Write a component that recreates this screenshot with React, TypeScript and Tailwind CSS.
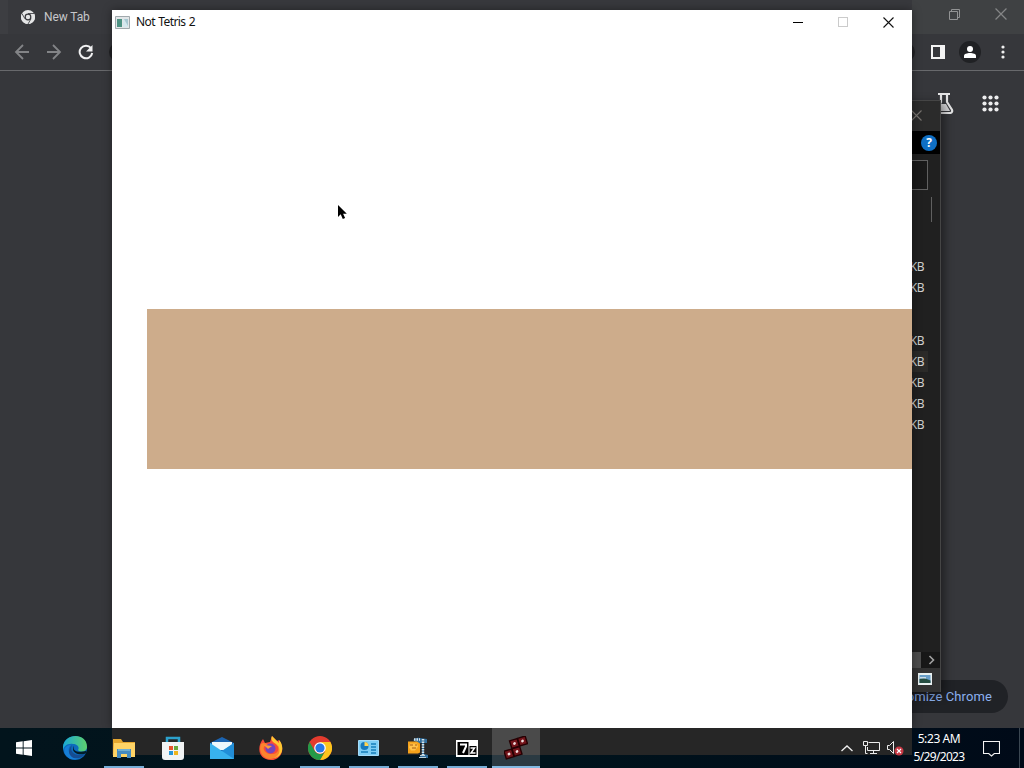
import React from "react";

function ChromeMark({ mono = false, size }: { mono?: boolean; size: number }) {
  const c = mono ? ["#e4e5e6", "#e4e5e6", "#e4e5e6"] : ["#e33b2e", "#fcc51d", "#249a48"];
  return (
    <svg width={size} height={size} viewBox="0 0 24 24">
      <circle cx="12" cy="12" r="12" fill={c[0]} />
      <path d="M12 6h10.4A12 12 0 0 1 12 24l5.2-9Z" fill={c[1]} />
      <path d="M1.6 6 6.8 15a6 6 0 0 0 10.4 0L12 24A12 12 0 0 1 1.6 6Z" fill={c[2]} />
      {mono && <path d="M12 6h10.4M6.8 15 1.6 6M17.2 15 12 24" stroke="#35363a" strokeWidth="1.4" />}
      <circle cx="12" cy="12" r="5.8" fill={mono ? "#35363a" : "#fff"} />
      <circle cx="12" cy="12" r={mono ? 3.8 : 4.6} fill={mono ? "#e4e5e6" : "#2778e8"} />
    </svg>
  );
}

function Cross({ color, size = 11 }: { color: string; size?: number }) {
  return (
    <svg width={size} height={size} viewBox="0 0 11 11">
      <path d="m.5.5 10 10m0-10-10 10" stroke={color} strokeWidth="1.1" />
    </svg>
  );
}

function Browser() {
  return (
    <div className="absolute inset-0 flex h-[728px] flex-col bg-[#36373b]">
      <div className="flex h-[34px] items-center justify-between bg-[#38393d]">
        <div className="flex h-full items-center">
          <div className="h-full w-2 bg-[#3d3e42]" />
          <div className="ml-[13px] flex items-center gap-[9px]">
            <ChromeMark mono size={14} />
            <span className="text-[12px] leading-4 tracking-[-0.1px] text-[#c6c7ca]">New Tab</span>
          </div>
        </div>
        <div className="flex h-full w-[112px] items-start bg-[#3f4143] pt-[9px] pl-[37px]">
          <svg width="11" height="11" viewBox="0 0 11 11" fill="none" stroke="#929394">
            <path d="M.5 2.5h8v8h-8zM2.5 2.5v-2h8v8h-2" />
          </svg>
          <span className="-mt-px ml-[35px]"><Cross color="#858687" size={12} /></span>
        </div>
      </div>
      <div className="flex h-[37px] items-center justify-between border-b border-[#68696c] bg-[#36373b]">
        <div className="flex items-center gap-4 pl-[14px]">
          <svg width="16" height="16" viewBox="0 0 16 16" fill="none" stroke="#838487" strokeWidth="1.8"><path d="M15 8H2m7-7L2 8l7 7" /></svg>
          <svg width="16" height="16" viewBox="0 0 16 16" fill="none" stroke="#838487" strokeWidth="1.8"><path d="M1 8h13M7 1l7 7-7 7" /></svg>
          <svg width="16" height="16" viewBox="0 0 16 16" fill="none" stroke="#f1f1f2" strokeWidth="2"><path d="M13 4.2A6.3 6.3 0 1 0 14.2 9" /><path d="M14.5 1v6.500H8Z" fill="#f1f1f2" stroke="none" /></svg>
          <div className="-ml-px h-5 w-8 rounded-full bg-[#202124]" />
        </div>
        <div className="flex items-center">
          <div className="mr-4 h-5 w-6 rounded-full bg-[#202124]" />
          <svg width="14" height="14" viewBox="0 0 14 14"><path d="M0 0h14v14H0Zm2 2v10h7V2Z" fill="#f4f4f4" fillRule="evenodd" /></svg>
          <div className="ml-[14px] flex h-[22px] w-[22px] items-center justify-center rounded-full bg-[#202124]">
            <svg width="12" height="12" viewBox="0 0 12 12" fill="#fff"><circle cx="6" cy="3" r="3" /><path d="M0 12V9.8C0 8 3 7 6 7s6 1 6 2.800V12Z" /></svg>
          </div>
          <svg className="mr-[19px] ml-5" width="4" height="14" viewBox="0 0 4 14" fill="#f0f0f0"><circle cx="2" cy="2" r="1.6" /><circle cx="2" cy="7" r="1.6" /><circle cx="2" cy="12" r="1.6" /></svg>
        </div>
      </div>
      <div className="flex flex-1 flex-col items-end justify-between pt-[20px] pb-[15px]">
        <div className="flex items-center gap-[28px] pt-px pr-[25px]">
          <svg width="19" height="23" viewBox="0 0 19 23" fill="none" stroke="#e5e5e6" strokeWidth="2.2">
            <path d="M3 2h12M6 2v8L1.500 18.500Q.8 21 3 21h12.500q2.500-1 1.300-3.500L12 10V2" />
            <path d="M5 12h6l4 7H3Z" fill="#d6d6d8" stroke="none" />
          </svg>
          <svg width="17" height="17" viewBox="0 0 17 17" fill="#ededee">
            {[2.5, 8.5, 14.5].map((y) => [2.5, 8.5, 14.5].map((x) => <circle key={x + "-" + y} cx={x} cy={y} r="2.1" />))}
          </svg>
        </div>
        <div className="mr-4 flex h-[33px] w-[150px] items-center justify-end rounded-full bg-[#202226] pr-4 text-[13px] tracking-[0.1px] text-[#8bb0ef]">
          Customize Chrome
        </div>
      </div>
    </div>
  );
}

function Explorer() {
  return (
    <div className="absolute top-[100px] left-[800px] flex h-[592px] w-[141px] flex-col border-t border-r border-[#454545] bg-[#202020] shadow-[3px_3px_9px_rgba(0,0,0,0.45)]">
      <div className="flex h-[30px] shrink-0 items-center justify-end bg-[#2b2b2b] pr-[18px] pb-[2px]"><Cross color="#77736f" /></div>
      <div className="flex h-[23px] shrink-0 items-center justify-end bg-black pr-[3px]">
        <span className="flex h-[16px] w-[16px] items-center justify-center rounded-full bg-[#0f6fc4] font-['Open_Sans',sans-serif] text-[12px] font-bold text-white">?</span>
      </div>
      <div className="mt-[6px] mr-3 h-[30px] shrink-0 border border-[#606060] bg-[#191919]" />
      <div className="mt-[7px] mr-2 h-[25px] shrink-0 border-r border-[#606060]" />
      <div className="mt-[34px] flex flex-col text-right font-['Noto_Sans',sans-serif] text-[12px] leading-[21px] tracking-[-0.5px] text-[#d1d1d1]">
        <span className="pr-4">1 KB</span>
        <span className="pr-4">1 KB</span>
        <span className="mt-8 pr-4">1 KB</span>
        <span className="mr-3 bg-[#2b2a28] pr-1">1 KB</span>
        <span className="pr-4">1 KB</span>
        <span className="pr-4">1 KB</span>
        <span className="pr-4">1 KB</span>
      </div>
      <div className="mt-auto flex h-[16px] shrink-0 items-center justify-end bg-[#171717]">
        <div className="mr-[7px] h-full w-20 bg-[#4d4d4d]" />
        <svg className="mr-1" width="8" height="10" viewBox="0 0 8 10"><path d="m1.500 1 4 4-4 4" fill="none" stroke="#a2a2a2" strokeWidth="1.600" /></svg>
      </div>
      <div className="flex h-[24px] shrink-0 items-center justify-end bg-[#323232] pr-[8px] pb-[3px]">
        <svg width="14" height="12" viewBox="0 0 14 12"><path d="M0 0h14v12H0Z" fill="#e9f1f1" /><path d="M1.500 2h11v8h-11Z" fill="#699fc9" /><path d="M1.500 6 6 5l6.500 2.500V10h-11Z" fill="#254e42" /><path d="M2 4h6v1.500H2Z" fill="#c8dde9" /></svg>
      </div>
    </div>
  );
}

function GameWindow() {
  return (
    <div className="absolute top-[10px] left-[112px] flex h-[718px] w-[800px] flex-col bg-white shadow-[0_0_9px_rgba(0,0,0,0.4)]">
      <div className="flex h-6 shrink-0 items-center justify-between pr-[18px] pl-[3px]">
        <div className="flex items-center gap-[6px]">
          <svg width="15" height="13" viewBox="0 0 15 13">
            <path d="M.5.5h14v12H.5Z" fill="#e2e6e8" stroke="#a1a9ad" />
            <path d="M2 3h5v8H2Z" fill="#4d9283" /><path d="M8 3h5v8H8Z" fill="#d5e8ee" /><path d="M9 3h4v7Z" fill="#a8c8d2" />
          </svg>
          <span className="font-['Noto_Sans',sans-serif] text-[12px] leading-[16px] tracking-[-0.55px] text-[#111] [word-spacing:0.5px]">Not Tetris 2</span>
        </div>
        <div className="flex items-center">
          <div className="h-px w-[10px] bg-black" />
          <div className="ml-[35px] h-[10px] w-[10px] border border-[#cbcbcb]" />
          <span className="ml-[35px] flex"><Cross color="#111" /></span>
        </div>
      </div>
      <div className="mt-[275px] ml-[35px] h-[160px] bg-[#cdac8b]" />
      <svg className="absolute top-[194px] left-[225px]" width="11" height="17" viewBox="0 0 11 17"><path d="M1 1v12l2.700-2.700L5.800 15l2.300-1-2-4.200h3.700Z" fill="#000" /></svg>
    </div>
  );
}

const apps: { name: string; state: string; icon: React.ReactNode }[] = [
  { name: "edge", state: "", icon: (
    <svg width="24" height="24" viewBox="0 0 24 24">
      <defs><linearGradient id="eg" x2="1"><stop stopColor="#18a9d6" /><stop offset="1" stopColor="#5ed06b" /></linearGradient></defs>
      <circle cx="12" cy="12" r="12" fill="#0d6bbd" />
      <path d="M0 11C1-3 24-4 24 11c0 5-7 6-9 3 2-3-1-6-5-6C4 7 0 11 0 15Z" fill="url(#eg)" />
      <path d="M8 9c-6 5 0 15 9 13-11 5-18-5-15-10 1-2 4-3 6-3Z" fill="#167ed6" />
      <path d="M9 9c-3 7 3 12 13 9-4 6-15 6-16-2 0-3 1-5 3-7Z" fill="#164c91" />
      <path d="M11 10c-2 5 4 7 12 5l1 2-3 1c-6 1-11-1-11-5 0-1 0-2 1-3Z" fill="#031c29" />
    </svg>) },
  { name: "files", state: "open", icon: (
    <svg width="22" height="19" viewBox="0 0 22 19"><path d="M0 0h8l2 3h12v15H0Z" fill="#e5a730" /><path d="M1 4h21v14H0Z" fill="#ffd466" /><path d="M4 10h14v9h-4v-4H8v4H4Z" fill="#468bc0" /><path d="M5 10h12v2H5Z" fill="#70afd2" /></svg>) },
  { name: "store", state: "", icon: (
    <svg width="24" height="24" viewBox="0 0 24 24"><path d="M6 7V2h12v5" fill="none" stroke="#2ca2cd" strokeWidth="2.500" /><path d="M1 6h22v15q0 3-3 3H4q-3 0-3-3Z" fill="#f1f3f4" /><path d="M8 10h4v4H8Z" fill="#e6532c" /><path d="M13 10h4v4h-4Z" fill="#69a83c" /><path d="M8 15h4v4H8Z" fill="#2696d6" /><path d="M13 15h4v4h-4Z" fill="#efb51c" /></svg>) },
  { name: "mail", state: "", icon: (
    <svg width="24" height="22" viewBox="0 0 24 22"><path d="m0 6 12-6 12 6v15H0Z" fill="#1b63b0" /><path d="M2 5h20v8H2Z" fill="#edf7fc" /><path d="m0 6 12 8 12-8v16H0Z" fill="#38b1ed" /><path d="m24 6-12 8 12 8Z" fill="#218ed7" /></svg>) },
  { name: "firefox", state: "", icon: (
    <svg width="24" height="24" viewBox="0 0 24 24"><path d="m4 3 2 4 5-1 2-6 5 5 2-1c7 9 2 20-8 20C0 24-3 12 4 3Z" fill="#f94b38" /><path d="M13 0c-2 4 1 6 4 8 6 6 2 12-5 14 12 1 14-12 8-18v3Z" fill="#ffc832" /><path d="M2 8c2-2 5-1 7 1-7 0-5 8 2 9 8 1 10-5 7-10 6 8 0 15-7 15S-1 15 2 8Z" fill="#fb842d" /><circle cx="11.500" cy="12.500" r="5" fill="#7545bd" /><path d="m5 9 8 1-4 3Z" fill="#ff9c33" /></svg>) },
  { name: "chrome", state: "open", icon: <ChromeMark size={24} /> },
  { name: "panel", state: "open", icon: (
    <svg width="21" height="16" viewBox="0 0 21 16"><path d="M.5.5h20v15H.5Z" fill="#7dcdf4" stroke="#a4dcfa" /><circle cx="6.500" cy="6" r="4" fill="#1679bd" /><path d="M6.500 6V2a4 4 0 0 1 4 4Z" fill="#ffd352" /><path d="M13 4h5m-5 3h5m-5 3h5M3 12h7m3 1h5" stroke="#167fbb" strokeWidth="1.500" /></svg>) },
  { name: "archive", state: "open", icon: (
    <svg width="20" height="22" viewBox="0 0 20 22">
      <path d="M5 3q3-3 7-2l7 1v4h-3v11l4 1v3H11l3-4V6H9Z" fill="#326f9e" />
      <path d="M6 2.500h6M15 2v17" fill="none" stroke="#d8e2e6" strokeWidth="2.500" strokeDasharray="1.500 1" />
      <path d="M11 20.500h7M12 18.500h5" stroke="#b9d0db" />
      <path d="M0 4.500h9l3 2v9l-2 1H0Z" fill="#f5a21b" />
      <path d="M2 6.500h7l1 3-3 4H3l-2-3Z" fill="#ffc24a" />
      <path d="M2 8h3m2 0h2M4 11h4" stroke="#a65d13" />
    </svg>) },
  { name: "sevenzip", state: "open", icon: (
    <svg width="22" height="17" viewBox="0 0 22 17"><path d="M0 0h22v17H0Z" fill="#fff" /><path d="M1.500 2h11v13h-11ZM13.500 6h7v9h-7Z" fill="#000" /><path d="M4 4.500h6v2L7 13" fill="none" stroke="#fff" strokeWidth="2" /><path d="M14.500 8h4l-3.500 5h4.500" fill="none" stroke="#fff" strokeWidth="1.500" /></svg>) },
  { name: "game", state: "active", icon: (
    <svg width="24" height="24" viewBox="0 0 24 24">
      {[[10.5, 7.5], [18.5, 5], [5, 18], [13, 15.5]].map(([x, y]) => (
        <g key={x} transform={`translate(${x} ${y}) rotate(-17)`}>
          <rect x="-4" y="-4" width="8" height="8" fill="#74151b" stroke="#250003" strokeWidth="1.4" />
          <circle r="1.4" fill="#efdede" />
        </g>
      ))}
    </svg>) },
];

function Taskbar() {
  return (
    <div className="absolute top-[728px] left-0 flex h-10 w-full bg-[linear-gradient(90deg,#02141c_0%,#00131c_55%,#000a18_100%)]">
      <div className="absolute top-0 left-[112px] h-[27px] w-[800px] bg-[#262626]" />
      <div className="relative flex w-full">
        <div className="flex w-[50px] items-center pl-4">
          <svg width="16" height="16" viewBox="0 0 16 16" fill="#fff"><path d="m0 2.200 6.700-.9v6.200H0ZM7.600 1.200 16 0v7.500H7.600ZM0 8.400h6.700v6.300L0 13.800ZM7.600 8.400H16V16l-8.400-1.200Z" /></svg>
        </div>
        {apps.map((app) => (
          <div key={app.name} className={app.state === "active" ? "ml-px flex w-[48px] flex-col items-center bg-white/17" : "flex w-[49px] flex-col items-center"}>
            <div className="flex h-[38px] items-center pt-[2px]">{app.icon}</div>
            <div className={app.state === "active" ? "h-[2px] w-full bg-[#82b9e2]" : app.state === "open" ? "h-[2px] w-10 bg-[#76add7]" : "h-[2px] w-10"} />
          </div>
        ))}
        <div className="ml-auto flex items-center">
          <svg width="12" height="7" viewBox="0 0 12 7"><path d="m.5 6 5.500-5 5.500 5" fill="none" stroke="#eee" strokeWidth="1.300" /></svg>
          <svg className="ml-[10px]" width="17" height="14" viewBox="0 0 17 14" fill="none" stroke="#ececec"><path d="M5.500 1.500h11v8h-12V6M10.500 9.500v3M7 12.500h7M.5.5h4v4h-4zM2.500 4.500v8h2" /></svg>
          <svg className="ml-[7px]" width="17" height="16" viewBox="0 0 17 16"><path d="M.5 5.500h2l4-4v12l-4-4h-2Z" fill="none" stroke="#eee" /><circle cx="12" cy="11" r="4.500" fill="#c83945" /><path d="m10 9 4 4m0-4-4 4" stroke="#fff" strokeWidth="1.100" /></svg>
          <div className="ml-[7px] flex w-[56px] flex-col items-center font-['Noto_Sans',sans-serif] text-[12px] leading-[18px] text-white">
            <span className="tracking-[-0.4px] whitespace-nowrap">5:23 AM</span>
            <span className="tracking-[-0.65px] whitespace-nowrap">5/29/2023</span>
          </div>
          <svg className="ml-[16px]" width="17" height="17" viewBox="0 0 17 17"><path d="M.5 1.500h16v12h-5.200L8.500 16l-2.800-2.500H.5Z" fill="none" stroke="#f4f4f4" strokeWidth="1.100" /></svg>
          <div className="ml-[19px] h-10 w-[5px] border-l border-[#3b4752]" />
        </div>
      </div>
    </div>
  );
}

export default function App() {
  return (
    <div className="relative h-[768px] w-[1024px] overflow-hidden bg-[#36373b] font-[Roboto,sans-serif]">
      <Browser />
      <Explorer />
      <GameWindow />
      <Taskbar />
    </div>
  );
}
